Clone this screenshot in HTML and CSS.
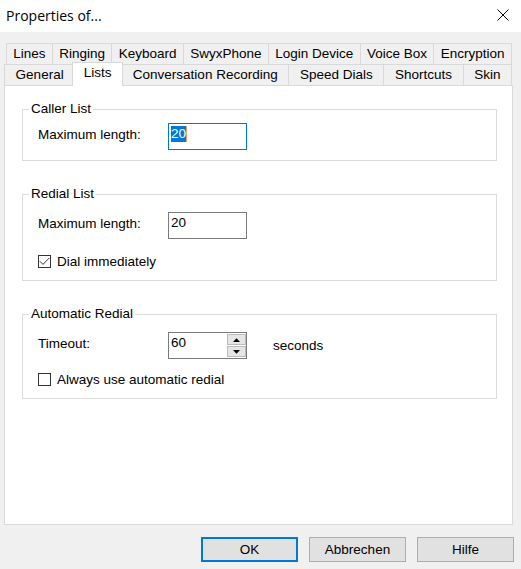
FILE: index.html
```html
<!DOCTYPE html>
<html lang="en">
<head>
<meta charset="utf-8">
<title>Properties of...</title>
<link rel="stylesheet" href="styles.css">
</head>
<body>
<div class="window">
  <header class="titlebar">
    <span class="title">Properties of...</span>
    <svg class="close" width="12" height="12" viewBox="0 0 12 12" aria-label="Close"><path d="M0.5 0.5 L11.5 11.5 M11.5 0.5 L0.5 11.5" stroke="#000" stroke-width="1" fill="none"/></svg>
  </header>

  <nav class="tabs">
    <div class="tab-row row-back">
      <div class="tab">Lines</div>
      <div class="tab">Ringing</div>
      <div class="tab">Keyboard</div>
      <div class="tab">SwyxPhone</div>
      <div class="tab">Login Device</div>
      <div class="tab">Voice Box</div>
      <div class="tab">Encryption</div>
    </div>
    <div class="tab-row row-front">
      <div class="tab">General</div>
      <div class="tab tab-active">Lists</div>
      <div class="tab">Conversation Recording</div>
      <div class="tab">Speed Dials</div>
      <div class="tab">Shortcuts</div>
      <div class="tab">Skin</div>
    </div>
  </nav>

  <main class="panel">
    <fieldset class="group group-caller">
      <legend>Caller List</legend>
      <div class="field-row">
        <span class="label">Maximum length:</span>
        <div class="textbox textbox-focus"><span class="value"><span class="selection">20</span></span></div>
      </div>
    </fieldset>

    <fieldset class="group group-redial">
      <legend>Redial List</legend>
      <div class="field-row">
        <span class="label">Maximum length:</span>
        <div class="textbox"><span class="value">20</span></div>
      </div>
      <div class="check-row">
        <span class="checkbox"><svg width="11" height="11" viewBox="0 0 11 11"><polyline points="0.8,5.2 4,8.4 10.2,2" fill="none" stroke="#333" stroke-width="1"/></svg></span>
        <span>Dial immediately</span>
      </div>
    </fieldset>

    <fieldset class="group group-auto">
      <legend>Automatic Redial</legend>
      <div class="field-row">
        <span class="label">Timeout:</span>
        <div class="textbox">
          <span class="value">60</span>
          <span class="spinner">
            <span class="spin-btn"><svg width="7" height="4" viewBox="0 0 7 4"><path d="M0 4 H7 L3.5 0.3 Z" fill="#000"/></svg></span>
            <span class="spin-btn"><svg width="7" height="4" viewBox="0 0 7 4"><path d="M0 0 H7 L3.5 3.7 Z" fill="#000"/></svg></span>
          </span>
        </div>
        <span class="unit">seconds</span>
      </div>
      <div class="check-row">
        <span class="checkbox"></span>
        <span>Always use automatic redial</span>
      </div>
    </fieldset>
  </main>

  <footer class="buttons">
    <button class="btn btn-default">OK</button>
    <button class="btn">Abbrechen</button>
    <button class="btn">Hilfe</button>
  </footer>
</div>
</body>
</html>
```

FILE: styles.css
```css
* { box-sizing: border-box; }

html, body { margin: 0; padding: 0; }

body {
  width: 521px;
  height: 569px;
  overflow: hidden;
  background: #f0f0f0;
  font-family: "Liberation Sans", Arial, sans-serif;
  font-size: 13.5px;
  color: #000;
}

.titlebar {
  height: 32px;
  background: #fff;
  display: flex;
  align-items: center;
  justify-content: space-between;
  padding: 0 12px 2px 6px;
}

.title {
  font-family: "Open Sans", "Noto Sans", sans-serif;
  font-size: 14px;
}

.close { display: block; }

.tabs { padding-top: 11px; }

.tab-row {
  display: flex;
  height: 21px;
  padding-right: 9px;
}

.row-back { padding-left: 6px; }
.row-front { padding-left: 4px; }

.tab {
  flex: 1 1 auto;
  padding: 0 6px;
  border: 1px solid #d9d9d9;
  border-bottom: none;
  border-right: none;
  line-height: 20px;
  text-align: center;
  white-space: nowrap;
  background: #f0f0f0;
}

.tab:last-child { border-right: 1px solid #d9d9d9; }

.tab-active {
  position: relative;
  z-index: 1;
  height: 24px;
  margin: -2px -2px 0;
  background: #fff;
  border-right: 1px solid #d9d9d9;
}

.panel {
  margin: 0 8px 0 4px;
  height: 440px;
  border: 1px solid #d9d9d9;
  background: #fff;
  padding: 16px 15px 0 17px;
}

.group {
  margin: 0 0 26px;
  border: 1px solid #dcdcdc;
  padding: 11px 15px 9px;
  min-width: 0;
}

.group legend {
  padding: 0 2px;
  margin-left: -9px;
  line-height: 14px;
}

.group-caller { padding-top: 7px; padding-bottom: 10px; }

.field-row {
  display: flex;
  align-items: flex-start;
  height: 27px;
}

.label {
  width: 130px;
  padding-top: 4px;
  line-height: 15px;
}

.textbox {
  width: 79px;
  height: 27px;
  border: 1px solid #7a7a7a;
  background: #fff;
  display: flex;
}

.textbox-focus { border-color: #0078d7; }

.value {
  flex: 1;
  padding: 2px 0 0 2px;
  line-height: 16px;
}

.selection {
  display: inline-block;
  background: #0078d7;
  color: #fff;
  line-height: 16px;
  border-right: 1px solid #f0a060;
}

.spinner {
  width: 19px;
  margin: 1px 0;
  display: flex;
  flex-direction: column;
  gap: 1px;
}

.spin-btn {
  flex: 1;
  background: #e5e5e5;
  border: 1px solid #bcbcbc;
  display: flex;
  align-items: center;
  justify-content: center;
}

.spin-btn svg { display: block; }

.unit {
  margin-left: 26px;
  align-self: center;
}

.check-row {
  display: flex;
  align-items: center;
  gap: 6px;
  height: 19px;
  margin-top: 12px;
}

.group-redial .check-row { margin-top: 13px; }
.group-auto .check-row { margin-top: 11px; }

.checkbox {
  width: 13px;
  height: 13px;
  border: 1px solid #333;
  background: #fff;
  flex: none;
}

.checkbox svg { display: block; }

.buttons {
  display: flex;
  justify-content: flex-end;
  gap: 11px;
  padding: 12px 7px 0 0;
}

.btn {
  width: 97px;
  height: 25px;
  padding: 0;
  background: #e1e1e1;
  border: 1px solid #adadad;
  font: inherit;
  color: #000;
}

.btn-default { border: 2px solid #0078d7; }
```
